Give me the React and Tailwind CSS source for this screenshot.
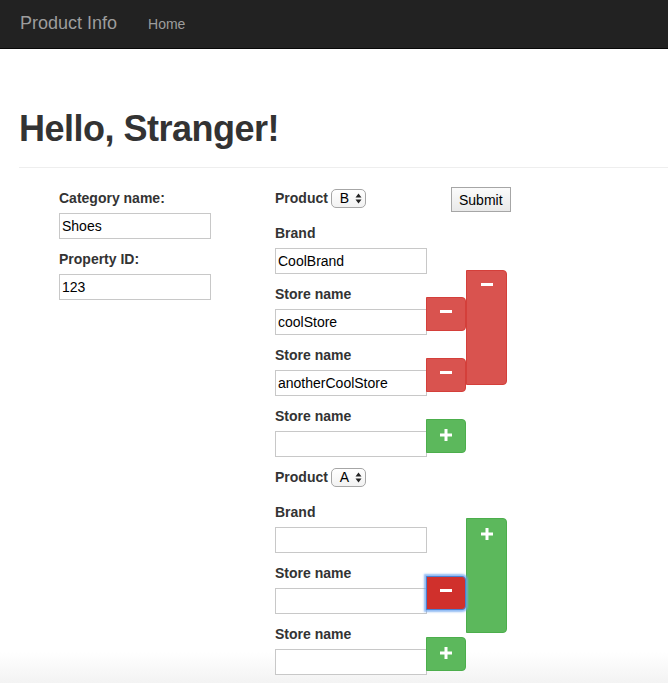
import { useState } from 'react';

const font = { fontFamily: '"Liberation Sans", Arial, sans-serif' };

const Glyph = ({ type }) => (
  <svg width="14" height="14" viewBox="0 0 14 14" className="block">
    {type === 'plus' ? (
      <>
        <rect x="1" y="6.5" width="12" height="3" fill="#fff" />
        <rect x="5.5" y="2" width="3" height="12" fill="#fff" />
      </>
    ) : (
      <rect x="1" y="5" width="12" height="3" fill="#fff" />
    )}
  </svg>
);

const btnColors = {
  minus: 'bg-[#d9534f] border-[#d43f3a]',
  plus: 'bg-[#5cb85c] border-[#4cae4c]',
  focused: 'bg-[#d0302c] border-[#4a7fd0] shadow-[0_0_2px_2px_rgba(110,165,240,0.75)] z-10',
};

const SideButton = ({ type, focused }) => (
  <button
    className={`relative w-[40px] h-[34px] ml-[-1px] mt-[13px] border rounded-r-[4px] flex justify-center items-start pt-[7px] shrink-0 ${focused ? btnColors.focused : btnColors[type]}`}
  >
    <Glyph type={type} />
  </button>
);

const TextInput = ({ value, w = 'w-[152px]' }) => (
  <input
    defaultValue={value}
    className={`${w} h-[26px] border border-[#c8c8c8] bg-white px-[2px] text-[14px] text-black outline-none block`}
    style={font}
  />
);

const Label = ({ children }) => <div className="text-[14px] leading-[20px] font-bold text-[#333] mb-[5px]">{children}</div>;

const FakeSelect = ({ value }) => (
  <span className="inline-flex items-center h-[19px] w-[35px] ml-[3px] border border-[#a6a6a6] rounded-[5px] bg-gradient-to-b from-white to-[#f2f2f2] pl-[3px] align-top mt-[1px]">
    <span className="text-[14px] font-normal text-black leading-[17px] w-[19px] text-center">{value}</span>
    <svg width="7" height="11" viewBox="0 0 7 11" className="ml-[1px]">
      <path d="M3.5 0.5 L6.5 4.5 L0.5 4.5 Z" fill="#222" />
      <path d="M3.5 10.5 L6.5 6.5 L0.5 6.5 Z" fill="#222" />
    </svg>
  </span>
);

const StoreRow = ({ value, type, focused }) => (
  <div className="flex items-start mt-[10px]">
    <div>
      <Label>Store name</Label>
      <TextInput value={value} />
    </div>
    <SideButton type={type} focused={focused} />
  </div>
);

const ProductBlock = ({ product, brand, stores, big, bigTop }) => (
  <div className="flex items-start">
    <div className="w-[191px] shrink-0">
      <div className="text-[14px] leading-[20px] font-bold text-[#333] h-[20px] whitespace-nowrap">
        Product
        <FakeSelect value={product} />
      </div>
      <div className="mt-[15px]">
        <Label>Brand</Label>
        <TextInput value={brand} />
      </div>
      {stores.map((s, i) => (
        <StoreRow key={i} value={s.value} type={s.type} focused={s.focused} />
      ))}
    </div>
    <button
      className={`w-[41px] h-[115px] border rounded-r-[4px] flex justify-center items-start pt-[7px] shrink-0 ${btnColors[big]} ${bigTop}`}
    >
      <Glyph type={big} />
    </button>
  </div>
);

export default function App() {
  const [products] = useState([
    {
      product: 'B',
      brand: 'CoolBrand',
      big: 'minus',
      bigTop: 'mt-[82px]',
      stores: [
        { value: 'coolStore', type: 'minus' },
        { value: 'anotherCoolStore', type: 'minus' },
        { value: '', type: 'plus' },
      ],
    },
    {
      product: 'A',
      brand: '',
      big: 'plus',
      bigTop: 'mt-[51px]',
      stores: [
        { value: '', type: 'minus', focused: true },
        { value: '', type: 'plus' },
      ],
    },
  ]);

  return (
    <div
      className="h-[683px] overflow-hidden text-[#333] bg-[linear-gradient(to_bottom,#ffffff_652px,#f3f3f3_683px)]"
      style={font}
    >
      <nav className="h-[49px] bg-[#222] border-b border-[#080808] flex items-start">
        <span className="ml-[20px] pt-[13px] text-[18px] leading-[20px] text-[#9d9d9d]">Product Info</span>
        <span className="ml-[31px] pt-[14px] text-[14px] leading-[20px] text-[#9d9d9d]">Home</span>
      </nav>

      <div className="ml-[19px] pt-[60px] pb-[18px] border-b border-[#eee]">
        <h1 className="text-[36px] leading-[40px] font-bold tracking-[-0.5px] text-[#333]">Hello, Stranger!</h1>
      </div>

      <main className="flex items-start pt-[20px] pl-[59px]">
        <div className="w-[152px] shrink-0">
          <Label>Category name:</Label>
          <TextInput value="Shoes" />
          <div className="mt-[10px]">
            <Label>Property ID:</Label>
            <TextInput value="123" />
          </div>
        </div>

        <div className="ml-[64px] w-[176px] shrink-0">
          {products.map((p, i) => (
            <div key={i} className={i ? 'mt-[10px]' : ''}>
              <ProductBlock {...p} />
            </div>
          ))}
        </div>

        <button className="mt-[-1px] h-[25px] px-[7px] border border-[#a6a6a6] bg-gradient-to-b from-[#fbfbfb] to-[#e9e9e9] text-[14px] text-black leading-[20px]">
          Submit
        </button>
      </main>
    </div>
  );
}
